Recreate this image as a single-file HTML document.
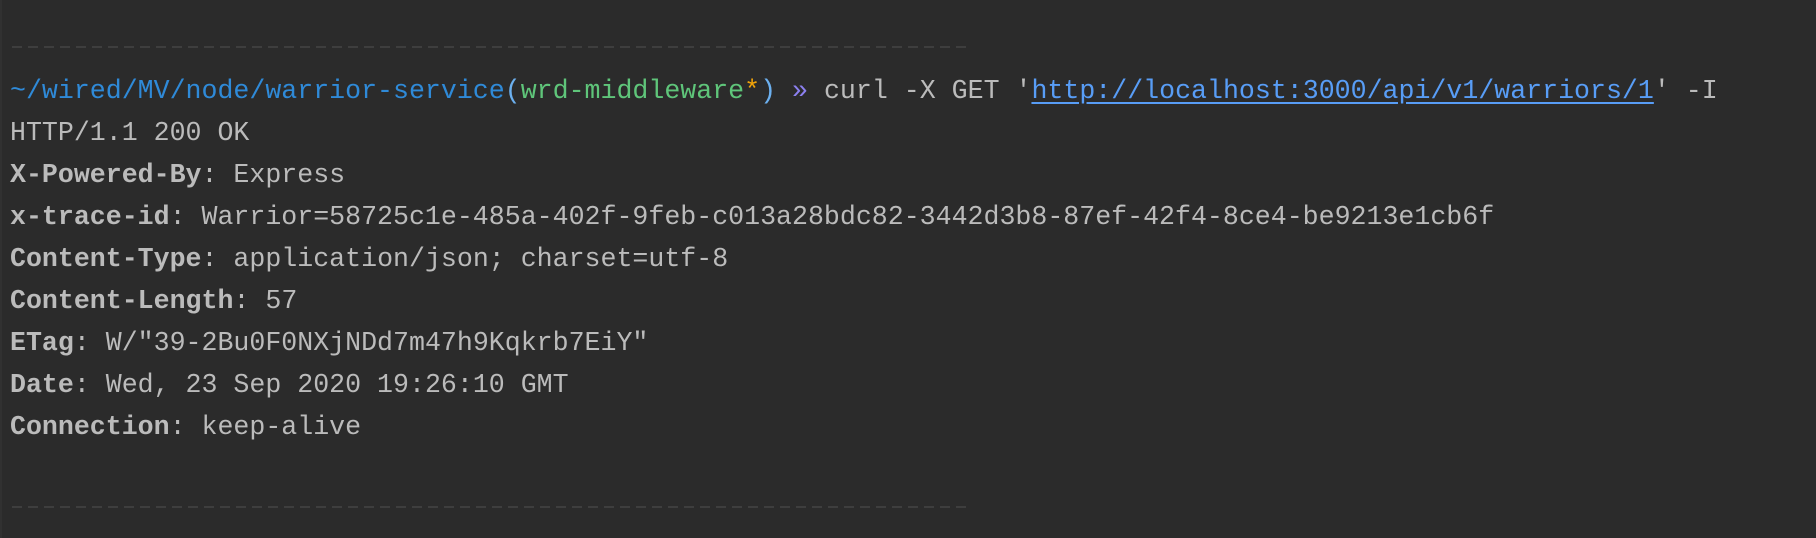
<!DOCTYPE html>
<html><head><meta charset="utf-8"><style>
html,body{margin:0;padding:0;background:#2b2b2b;width:1816px;height:538px;overflow:hidden;}
.strip{position:absolute;left:0;top:0;width:2px;height:538px;background:#313131;}
.dash{position:absolute;left:12px;width:956px;height:2px;background:repeating-linear-gradient(90deg,#3e3e3e 0 10px,transparent 10px 16px);}
.l{position:absolute;left:10px;font-family:"Liberation Mono",monospace;font-size:26.6px;color:#bbbbbb;white-space:pre;line-height:42px;letter-spacing:0;}
b{font-weight:bold;}
.p{color:#2f8ad8}.pa{color:#6cb0ef}.g{color:#5fc57a}.s{color:#f0a30a}.v{color:#8c80f0}
.u{color:#589df6;text-decoration:underline;text-underline-offset:4px;}
</style></head><body>
<div class="strip"></div>
<div class="dash" style="top:46px"></div>
<div class="l" style="top:70px"><span class="p">~/wired/MV/node/warrior-service</span><span class="pa">(</span><span class="g">wrd-middleware</span><span class="s">*</span><span class="pa">)</span> <span class="v">»</span> curl -X GET '<span class="u">http://localhost:3000/api/v1/warriors/1</span>' -I</div>
<div class="l" style="top:112px">HTTP/1.1 200 OK</div>
<div class="l" style="top:154px"><b>X-Powered-By</b>: Express</div>
<div class="l" style="top:196px"><b>x-trace-id</b>: Warrior=58725c1e-485a-402f-9feb-c013a28bdc82-3442d3b8-87ef-42f4-8ce4-be9213e1cb6f</div>
<div class="l" style="top:238px"><b>Content-Type</b>: application/json; charset=utf-8</div>
<div class="l" style="top:280px"><b>Content-Length</b>: 57</div>
<div class="l" style="top:322px"><b>ETag</b>: W/"39-2Bu0F0NXjNDd7m47h9Kqkrb7EiY"</div>
<div class="l" style="top:364px"><b>Date</b>: Wed, 23 Sep 2020 19:26:10 GMT</div>
<div class="l" style="top:406px"><b>Connection</b>: keep-alive</div>
<div class="dash" style="top:506px"></div>
</body></html>
